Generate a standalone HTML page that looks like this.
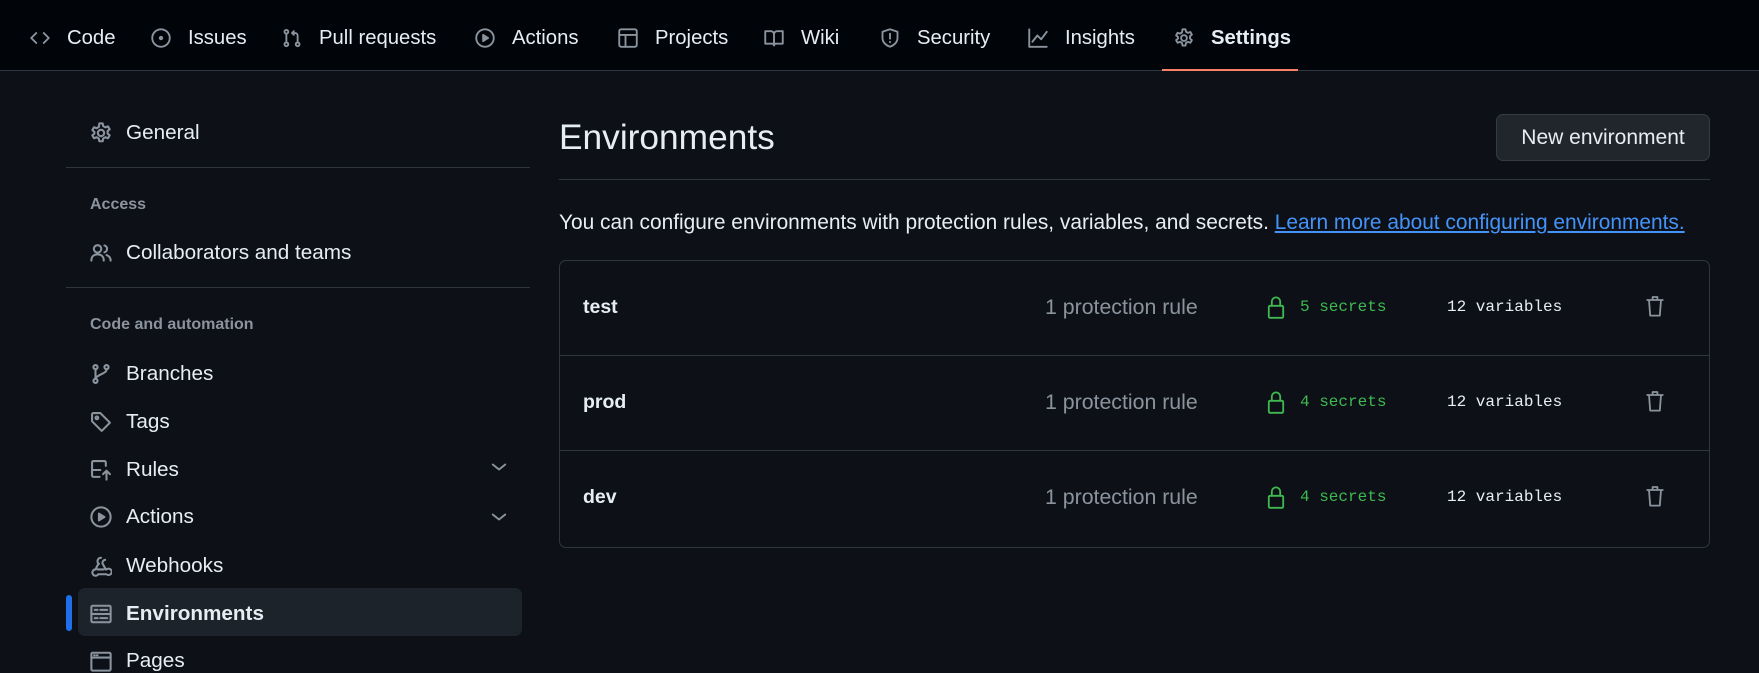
<!DOCTYPE html>
<html><head><meta charset="utf-8"><style>
*{box-sizing:border-box;margin:0;padding:0}
body{width:1759px;height:670px;overflow:hidden;background:#0d1117;color:#e6edf3;font-family:"Liberation Sans",sans-serif;position:relative}
.nav{position:absolute;left:0;top:0;width:1759px;height:71px;background:#010409;border-bottom:1px solid #30363d}
.ni{position:absolute;top:26px;font-size:20.3px;color:#e6edf3;line-height:24px}
.ni svg{position:absolute;top:2px}
svg{fill:none;stroke:#8b949e;stroke-width:1.5;stroke-linecap:round;stroke-linejoin:round}
.s{position:absolute;font-size:20.7px;line-height:24px}
.s svg{position:absolute;left:-36px;top:1px}
.h{position:absolute;font-size:16px;color:#8b949e;font-weight:bold}
.hr{position:absolute;height:1px;background:#30363d}
.row{position:absolute;left:559px;width:1151px;height:95px}
.row .n{position:absolute;left:24px;top:35px;font-size:19.5px;font-weight:bold}
.row .p{position:absolute;left:486px;top:34px;font-size:21.3px;color:#8b949e}
.row .sc{position:absolute;left:741px;top:35px;font-family:"Liberation Mono",monospace;font-size:16px;color:#3fb950}
.row .v{position:absolute;left:888px;top:35px;font-family:"Liberation Mono",monospace;font-size:16px;color:#e6edf3}
.mono{line-height:22px}
</style></head><body>
<div class="nav">
<div class="ni" style="left:67px"><svg width="20" height="20" viewBox="0 0 16 16" style="left:-37px"><path d="M5 4 1 8l4 4M11 4l4 4-4 4"/></svg>Code</div>
<div class="ni" style="left:188px"><svg width="20" height="20" viewBox="0 0 16 16" style="left:-37px"><circle cx="8" cy="8" r="7"/><circle cx="8" cy="8" r="1" fill="#8b949e"/></svg>Issues</div>
<div class="ni" style="left:319px"><svg width="20" height="20" viewBox="0 0 16 16" style="left:-37px"><circle cx="3.5" cy="3" r="1.5"/><circle cx="3.5" cy="13" r="1.5"/><circle cx="12.5" cy="13" r="1.5"/><path d="M3.5 4.5v7M12.5 11.5V6a2 2 0 0 0-2-2H8M9.5 2.5 8 4l1.5 1.5"/></svg>Pull requests</div>
<div class="ni" style="left:512px"><svg width="20" height="20" viewBox="0 0 16 16" style="left:-37px"><circle cx="8" cy="8" r="7"/><path d="M6.5 5.5v5l4-2.5z" fill="#8b949e"/></svg>Actions</div>
<div class="ni" style="left:655px"><svg width="20" height="20" viewBox="0 0 16 16" style="left:-37px"><rect x="1" y="1" width="14" height="14" rx="1.5"/><path d="M1 5.5h14M6 5.5V15"/></svg>Projects</div>
<div class="ni" style="left:801px"><svg width="20" height="20" viewBox="0 0 16 16" style="left:-37px"><path d="M1 2.5h4.5A2.5 2.5 0 0 1 8 5v9a2 2 0 0 0-2-1.5H1zM15 2.5h-4.5A2.5 2.5 0 0 0 8 5v9a2 2 0 0 1 2-1.5h5z"/></svg>Wiki</div>
<div class="ni" style="left:917px"><svg width="20" height="20" viewBox="0 0 16 16" style="left:-37px"><path d="M8 1 2 3v5c0 3.5 3 6 6 7 3-1 6-3.5 6-7V3z"/><path d="M8 4.5v4M8 11v.3"/></svg>Security</div>
<div class="ni" style="left:1065px"><svg width="20" height="20" viewBox="0 0 16 16" style="left:-37px"><path d="M1 1v14h14M3.5 11l4-5 3 3L15 3"/></svg>Insights</div>
<div class="ni" style="left:1211px;font-weight:bold"><svg width="20" height="20" viewBox="0 0 16 16" style="left:-37px"><circle cx="8" cy="8" r="2.3"/><path d="M6.8 1h2.4l.4 2 1.6.9 1.9-.7 1.2 2.1-1.5 1.3v1.8l1.5 1.3-1.2 2.1-1.9-.7-1.6.9-.4 2H6.8l-.4-2-1.6-.9-1.9.7-1.2-2.1 1.5-1.3V7.2L1.7 5.9l1.2-2.1 1.9.7 1.6-.9z"/></svg>Settings</div>
<div style="position:absolute;left:1162px;top:69px;width:136px;height:2px;background:#f78166"></div>
</div>

<div class="s" style="left:126px;top:121px"><svg width="22" height="22" viewBox="0 0 16 16"><circle cx="8" cy="8" r="2.3"/><path d="M6.8 1h2.4l.4 2 1.6.9 1.9-.7 1.2 2.1-1.5 1.3v1.8l1.5 1.3-1.2 2.1-1.9-.7-1.6.9-.4 2H6.8l-.4-2-1.6-.9-1.9.7-1.2-2.1 1.5-1.3V7.2L1.7 5.9l1.2-2.1 1.9.7 1.6-.9z"/></svg>General</div>
<div class="hr" style="left:66px;top:167px;width:464px"></div>
<div class="h" style="left:90px;top:196px">Access</div>
<div class="s" style="left:126px;top:241px"><svg width="22" height="22" viewBox="0 0 16 16"><circle cx="5.5" cy="5" r="2.7"/><path d="M1 13.5c0-3 2-4.5 4.5-4.5S10 10.5 10 13.5M10.5 2.5a2.6 2.6 0 0 1 0 5M12 9.5c1.8.6 3 2 3 4"/></svg>Collaborators and teams</div>
<div class="hr" style="left:66px;top:287px;width:464px"></div>
<div class="h" style="left:90px;top:316px">Code and automation</div>
<div class="s" style="left:126px;top:362px"><svg width="22" height="22" viewBox="0 0 16 16"><circle cx="4" cy="3" r="1.5"/><circle cx="4" cy="13" r="1.5"/><circle cx="12" cy="3" r="1.5"/><path d="M4 4.5v7M12 4.5c0 3-4 3-7.5 6"/></svg>Branches</div>
<div class="s" style="left:126px;top:410px"><svg width="22" height="22" viewBox="0 0 16 16"><path d="M1.5 2.5v5l7 7 6-6-7-7h-5a1 1 0 0 0-1 1z"/><circle cx="5" cy="5" r="1"/></svg>Tags</div>
<div class="s" style="left:126px;top:458px"><svg width="22" height="22" viewBox="0 0 16 16"><path d="M7 13H2.5a1 1 0 0 1-1-1V2.5a1 1 0 0 1 1-1h8a1 1 0 0 1 1 1V5M1.5 8h6M12 15V8.5M9.5 11 12 8.5l2.5 2.5"/></svg>Rules</div>
<div class="s" style="left:126px;top:505px"><svg width="22" height="22" viewBox="0 0 16 16"><circle cx="8" cy="8" r="7"/><path d="M6.5 5.5v5l4-2.5z" fill="#8b949e"/></svg>Actions</div>
<svg width="20" height="20" viewBox="0 0 16 16" style="position:absolute;left:489px;top:457px"><path d="M3 6l5 4 5-4"/></svg>
<svg width="20" height="20" viewBox="0 0 16 16" style="position:absolute;left:489px;top:507px"><path d="M3 6l5 4 5-4"/></svg>
<div class="s" style="left:126px;top:554px"><svg width="22" height="22" viewBox="0 0 16 16"><path d="M6 6.5 4 10.5M8 2a2.5 2.5 0 0 0-1.5 4.5M10 10.5H5.5M11 3.5A2.5 2.5 0 0 0 9 6l2.5 4.5M4 10.5a2.3 2.3 0 1 0 2 3.5h6a2.3 2.3 0 1 0 0-3.5"/></svg>Webhooks</div>
<div style="position:absolute;left:78px;top:588px;width:444px;height:48px;background:#1d232b;border-radius:7px"></div>
<div style="position:absolute;left:66px;top:595px;width:6px;height:36px;background:#1f6feb;border-radius:3px"></div>
<div class="s" style="left:126px;top:602px;font-weight:bold"><svg width="22" height="22" viewBox="0 0 16 16"><rect x="1" y="2" width="14" height="12" rx="1"/><path d="M1 8h14M3.5 5h2M3.5 11h2M7.5 5h5M7.5 11h5"/></svg>Environments</div>
<div class="s" style="left:126px;top:649px"><svg width="22" height="22" viewBox="0 0 16 16"><rect x="1" y="2" width="14" height="13" rx="1"/><path d="M1 5.5h14M3 3.8h.5M5 3.8h.5"/></svg>Pages</div>

<div style="position:absolute;left:559px;top:118px;font-size:35.3px;line-height:40px">Environments</div>
<div style="position:absolute;left:1496px;top:114px;width:214px;height:47px;background:#21262d;border:1px solid #363b42;border-radius:7px;font-size:21px;text-align:center;line-height:45px">New environment</div>
<div class="hr" style="left:559px;top:179px;width:1151px"></div>
<div style="position:absolute;left:559px;top:210px;font-size:20.9px;line-height:25px;white-space:nowrap">You can configure environments with protection rules, variables, and secrets. <span style="color:#4493f8;text-decoration:underline">Learn more about configuring environments.</span></div>

<div style="position:absolute;left:559px;top:260px;width:1151px;height:288px;border:1px solid #30363d;border-radius:7px"></div>
<div class="hr" style="left:560px;top:355px;width:1149px"></div>
<div class="hr" style="left:560px;top:450px;width:1149px"></div>

<div class="row" style="top:261px"><div class="n">test</div><div class="p">1 protection rule</div>
<svg width="20" height="24" viewBox="0 0 16 20" style="position:absolute;left:707px;top:34px;stroke:#3fb950"><rect x="2" y="9" width="12" height="10" rx="1"/><path d="M4.5 9V5.5a3.5 3.5 0 0 1 7 0V9"/></svg>
<div class="sc mono">5 secrets</div><div class="v mono">12 variables</div>
<svg width="20" height="24" viewBox="0 0 16 20" style="position:absolute;left:1086px;top:33px"><path d="M1.5 5h13M6 5V2.5h4V5M3 5l1 13h8l1-13"/></svg></div>
<div class="row" style="top:356px"><div class="n">prod</div><div class="p">1 protection rule</div>
<svg width="20" height="24" viewBox="0 0 16 20" style="position:absolute;left:707px;top:34px;stroke:#3fb950"><rect x="2" y="9" width="12" height="10" rx="1"/><path d="M4.5 9V5.5a3.5 3.5 0 0 1 7 0V9"/></svg>
<div class="sc mono">4 secrets</div><div class="v mono">12 variables</div>
<svg width="20" height="24" viewBox="0 0 16 20" style="position:absolute;left:1086px;top:33px"><path d="M1.5 5h13M6 5V2.5h4V5M3 5l1 13h8l1-13"/></svg></div>
<div class="row" style="top:451px"><div class="n">dev</div><div class="p">1 protection rule</div>
<svg width="20" height="24" viewBox="0 0 16 20" style="position:absolute;left:707px;top:34px;stroke:#3fb950"><rect x="2" y="9" width="12" height="10" rx="1"/><path d="M4.5 9V5.5a3.5 3.5 0 0 1 7 0V9"/></svg>
<div class="sc mono">4 secrets</div><div class="v mono">12 variables</div>
<svg width="20" height="24" viewBox="0 0 16 20" style="position:absolute;left:1086px;top:33px"><path d="M1.5 5h13M6 5V2.5h4V5M3 5l1 13h8l1-13"/></svg></div>
</body></html>
